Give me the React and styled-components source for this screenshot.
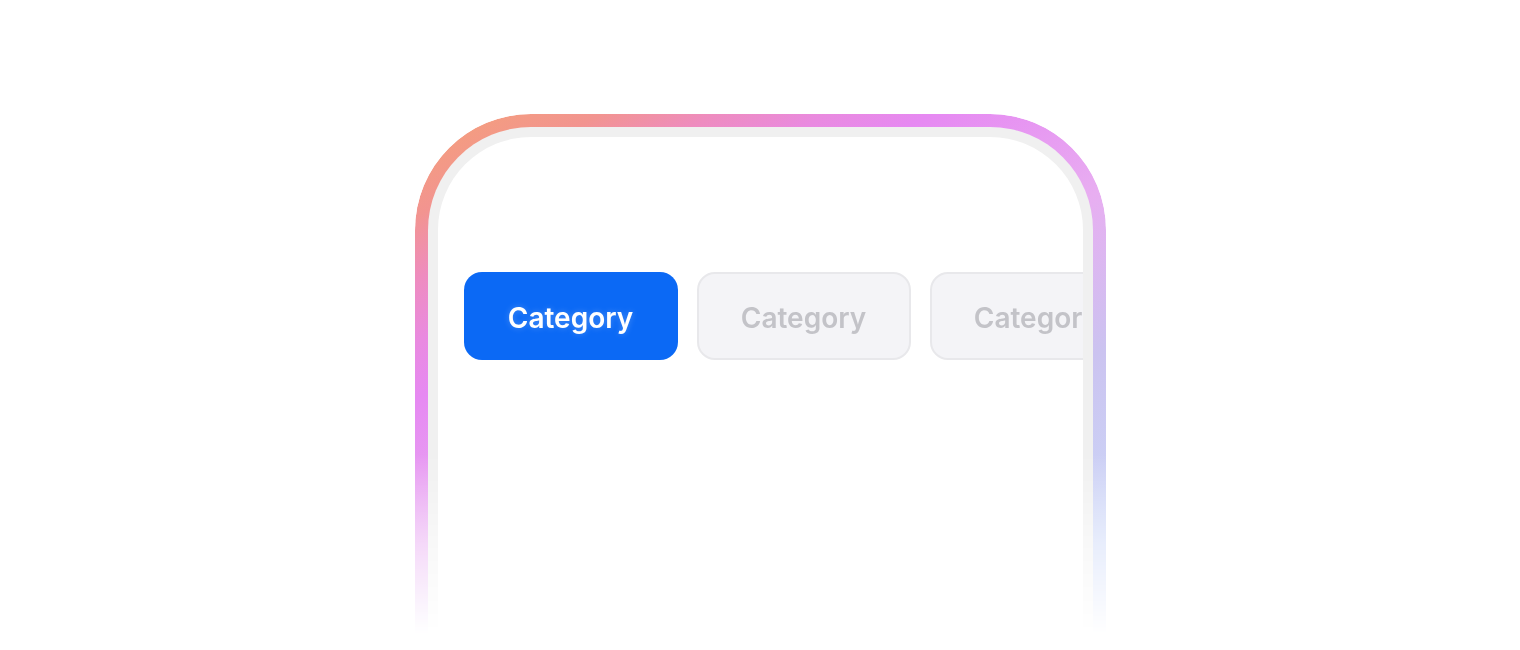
import styled, { createGlobalStyle } from "styled-components";

const GlobalStyle = createGlobalStyle`
  html, body {
    margin: 0;
    padding: 0;
    background: #ffffff;
  }
  body {
    font-family: Inter, "Noto Sans", sans-serif;
    height: 650px;
    overflow: hidden;
  }
`;

const Page = styled.div`
  display: flex;
  justify-content: center;
  padding-top: 114px;
  height: 650px;
  box-sizing: border-box;
`;

// marco exterior con degradado + desvanecido hacia abajo
const PhoneFrame = styled.div`
  width: 691px;
  height: 560px;
  box-sizing: border-box;
  padding: 13px 13px 0;
  border-radius: 116px 116px 0 0;
  background: linear-gradient(
    151deg,
    #f5a276 0px,
    #f29490 90px,
    #ee8cbf 145px,
    #e98ae0 200px,
    #e689f2 250px,
    #e8aef1 400px,
    #cbc3f0 540px,
    #ccd8f8 710px
  );
  -webkit-mask-image: linear-gradient(to bottom, #000 0, #000 340px, rgba(0, 0, 0, 0.45) 430px, transparent 520px);
  mask-image: linear-gradient(to bottom, #000 0, #000 340px, rgba(0, 0, 0, 0.45) 430px, transparent 520px);
`;

const Bezel = styled.div`
  height: 100%;
  box-sizing: border-box;
  padding: 10px 10px 0;
  border-radius: 103px 103px 0 0;
  background: #f0f0f0;
`;

const Screen = styled.div`
  height: 100%;
  box-sizing: border-box;
  border-radius: 93px 93px 0 0;
  background: #ffffff;
  overflow: hidden;
  padding: 135px 0 0 26px;
`;

const ChipRow = styled.div`
  display: flex;
  gap: 19px;
`;

const Chip = styled.button`
  flex: 0 0 auto;
  width: 214px;
  height: 88px;
  box-sizing: border-box;
  border-radius: 18px;
  font-family: Inter, "Noto Sans", sans-serif;
  font-weight: 600;
  font-size: 28px;
  display: flex;
  align-items: center;
  justify-content: center;
  padding: 3px 0 0 0;
  cursor: pointer;
  border: ${(p) => (p.$active ? "none" : "2px solid #e8e8eb")};
  background: ${(p) => (p.$active ? "#0b69f5" : "#f4f4f7")};
  color: ${(p) => (p.$active ? "#ffffff" : "#c3c3c8")};
  text-shadow: ${(p) => (p.$active ? "0 0 6px rgba(255,255,255,0.25)" : "none")};
`;

const categorias = ["Category", "Category", "Category"];

export default function App() {
  return (
    <>
      <GlobalStyle />
      <Page>
        <PhoneFrame>
          <Bezel>
            <Screen>
              <ChipRow>
                {categorias.map((c, i) => (
                  <Chip key={i} $active={i === 0}>
                    {c}
                  </Chip>
                ))}
              </ChipRow>
            </Screen>
          </Bezel>
        </PhoneFrame>
      </Page>
    </>
  );
}
